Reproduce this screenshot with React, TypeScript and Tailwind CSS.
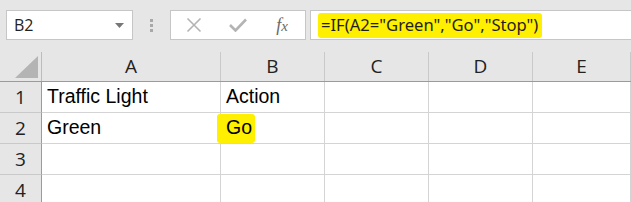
import React from 'react';

const cols = [
  { name: 'A', w: 'w-[179px]' },
  { name: 'B', w: 'w-[104px]' },
  { name: 'C', w: 'w-[104px]' },
  { name: 'D', w: 'w-[104px]' },
  { name: 'E', w: 'flex-1' },
];

const rows: string[][] = [
  ['Traffic Light', 'Action', '', '', ''],
  ['Green', 'Go', '', '', ''],
  ['', '', '', '', ''],
  ['', '', '', '', ''],
];

const uiFont = { fontFamily: '"Open Sans", "Liberation Sans", sans-serif' };
const cellFont = { fontFamily: '"Liberation Sans", Arial, sans-serif' };

export default function App() {
  return (
    <div className="w-[631px] h-[202px] overflow-hidden bg-[#e6e6e6]" style={uiFont}>
      {/* formula bar */}
      <div className="flex items-center h-[52px] pt-[10px] pb-[12px] pl-[6px]">
        <div className="flex items-center justify-between w-[127px] h-[30px] bg-white border border-[#c6c6c6] pl-[7px] pr-[8px]">
          <span className="text-[16px] text-[#222]">B2</span>
          <svg width="9" height="5" viewBox="0 0 9 5">
            <path d="M0 0 L9 0 L4.5 5 Z" fill="#777" />
          </svg>
        </div>
        <div className="w-[37px] flex flex-col items-center gap-[2px]">
          <div className="w-[3px] h-[3px] bg-[#a8a8a8]" />
          <div className="w-[3px] h-[3px] bg-[#a8a8a8]" />
          <div className="w-[3px] h-[3px] bg-[#a8a8a8]" />
        </div>
        <div className="flex items-center w-[136px] h-[30px] bg-white border border-[#c6c6c6]">
          <div className="w-[46px] flex justify-center">
            <svg width="16" height="16" viewBox="0 0 16 16">
              <path d="M1.5 1.5 L14.5 14.5 M14.5 1.5 L1.5 14.5" stroke="#b4b4b4" strokeWidth="1.6" />
            </svg>
          </div>
          <div className="w-[42px] flex justify-center">
            <svg width="18" height="14" viewBox="0 0 18 14">
              <path d="M1 7 L6.5 12.5 L17 1.5" stroke="#b4b4b4" strokeWidth="2.6" fill="none" />
            </svg>
          </div>
          <div className="flex-1 flex justify-center">
            <span className="italic text-[18px] text-[#6a6a6a]" style={{ fontFamily: '"Liberation Serif", serif' }}>
              f<span className="text-[15px]">x</span>
            </span>
          </div>
        </div>
        <div className="flex items-center ml-[4px] flex-1 h-[30px] bg-white border border-[#c6c6c6] border-r-0 pl-[7px]">
          <span className="bg-[#ffef00] pl-[3px] pr-[4px] h-[25px] flex items-center rounded-[3px] text-[16.6px] text-[#1f1f1f]" style={{ fontFamily: '"Noto Sans", "Liberation Sans", sans-serif' }}>
            =IF(A2="Green","Go","Stop")
          </span>
        </div>
      </div>
      {/* header row */}
      <div className="flex h-[30px] border-b border-[#9b9b9b]">
        <div className="w-[42px] border-r border-[#bcbcbc] flex items-end justify-end pr-[3px] pb-[3px]">
          <svg width="23" height="22" viewBox="0 0 23 22">
            <path d="M23 0 L23 22 L0 22 Z" fill="#b4b4b4" />
          </svg>
        </div>
        {cols.map((c) => (
          <div key={c.name} className={`${c.w} border-r border-[#c9c9c9] flex items-center justify-center text-[19px] text-[#222] leading-none`}>
            {c.name}
          </div>
        ))}
      </div>
      {/* rows */}
      {rows.map((r, i) => (
        <div key={i} className="flex h-[31px] bg-white">
          <div className="w-[42px] bg-[#e6e6e6] border-r border-[#9b9b9b] border-b border-b-[#c9c9c9] flex items-center justify-center text-[19px] text-[#222]">
            {i + 1}
          </div>
          {cols.map((c, j) => (
            <div key={c.name} className={`${c.w} border-r border-b border-[#d4d4d4] flex items-center pl-[5px] text-[19.5px] text-black`} style={cellFont}>
              {r[j] === 'Go' ? (
                <span className="bg-[#ffef00] -ml-[9px] pl-[9px] pr-[3px] h-[29px] flex items-center rounded-[3px]">Go</span>
              ) : (
                r[j]
              )}
            </div>
          ))}
        </div>
      ))}
    </div>
  );
}
